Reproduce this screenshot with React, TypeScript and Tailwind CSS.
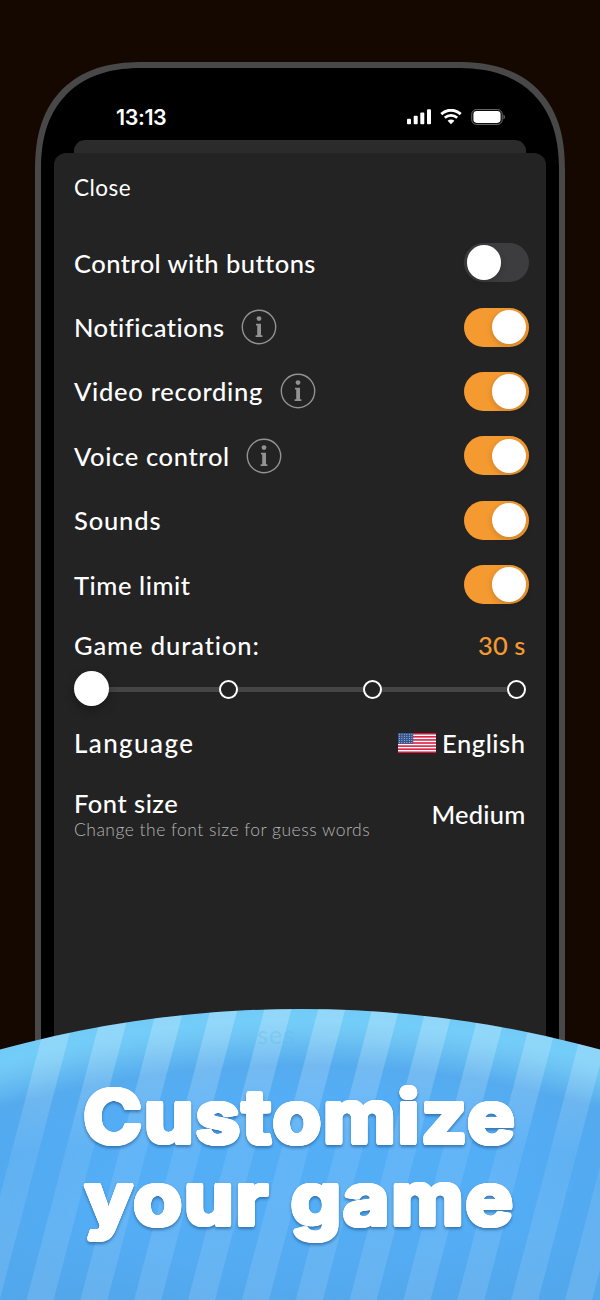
import React from "react";

type ToggleRow = { label: string; info?: boolean; on: boolean; tracking: string };

const rows: ToggleRow[] = [
  { label: "Control with buttons", on: false, tracking: "tracking-[0.44px]" },
  { label: "Notifications", info: true, on: true, tracking: "tracking-[0.5px]" },
  { label: "Video recording", info: true, on: true, tracking: "tracking-[0.72px]" },
  { label: "Voice control", info: true, on: true, tracking: "tracking-[0.65px]" },
  { label: "Sounds", on: true, tracking: "tracking-[0.85px]" },
  { label: "Time limit", on: true, tracking: "tracking-[0.55px]" },
];

function InfoIcon() {
  return (
    <svg className="ml-[16.5px] h-9 w-9 shrink-0" viewBox="0 0 36 36" fill="none">
      <circle cx="18" cy="18" r="16.7" stroke="#929292" strokeWidth="1.4" />
      <circle cx="18" cy="9.6" r="2.4" fill="#929292" />
      <path d="M15 14.8h5v11.4h1.4v1.7h-6.8v-1.7h1.6v-9.7H15z" fill="#929292" />
    </svg>
  );
}

function Toggle({ on }: { on: boolean }) {
  return (
    <div
      className={
        on
          ? "flex h-[39px] w-[64.5px] items-center justify-end rounded-full bg-[#f59a30] pr-[2.3px]"
          : "flex h-[39px] w-[64.5px] items-center rounded-full bg-[#3d3d40] pl-[2.5px]"
      }
    >
      <div className="size-[34.4px] rounded-full bg-white shadow-[0_2px_6px_rgba(0,0,0,0.18)]" />
    </div>
  );
}

function StatusIcons() {
  return (
    <div className="flex items-center">
      <svg className="h-4 w-6" viewBox="0 0 24 16" fill="#fff">
        <rect x="0" y="9.7" width="4" height="5.5" rx="1" />
        <rect x="6.7" y="6.8" width="4" height="8.4" rx="1" />
        <rect x="13.3" y="3.4" width="4" height="11.8" rx="1" />
        <rect x="20" y="0.3" width="4" height="14.9" rx="1" />
      </svg>
      <svg className="ml-[9px] h-4 w-[22px]" viewBox="0 0 22 16" fill="none" stroke="#fff">
        <path d="M1.3 5.1a14 14 0 0 1 19.4 0" strokeWidth="2.9" />
        <path d="M4.8 8.8a9 9 0 0 1 12.4 0" strokeWidth="2.7" />
        <path d="M11 15.2 7.6 11.8a4.9 4.9 0 0 1 6.8 0z" fill="#fff" stroke="none" />
      </svg>
      <svg className="ml-[9px] h-4 w-[35px]" viewBox="0 0 35 16" fill="none">
        <rect x="0.8" y="0.6" width="30.4" height="14.8" rx="4.6" stroke="#727272" strokeWidth="1" />
        <rect x="2.4" y="2.1" width="27.2" height="11.8" rx="3.3" fill="#fff" />
        <path d="M32.5 5.6c1.8.7 1.8 4.1 0 4.8z" fill="#727272" />
      </svg>
    </div>
  );
}

function Flag() {
  const bars = [0, 1, 2, 3, 4, 5, 6];
  const starRows = [0, 1, 2, 3, 4];
  const starCols = [0, 1, 2, 3, 4, 5];
  return (
    <svg className="h-5 w-[38px]" viewBox="0 0 38 20">
      <rect width="38" height="20" fill="#fff" />
      {bars.map((i) => (
        <rect key={i} y={(i * 40) / 13} width="38" height={20 / 13} fill="#d8173f" />
      ))}
      <rect width="15.3" height="10.77" fill="#34558f" />
      {starRows.map((r) =>
        starCols.map((c) => (
          <circle key={`${r}-${c}`} cx={1.4 + c * 2.5} cy={1.3 + r * 2.05} r="0.5" fill="#c5d0e2" />
        )),
      )}
    </svg>
  );
}

function Slider() {
  return (
    <div className="relative h-9 w-full">
      <div className="absolute left-[17px] right-[9px] top-[16px] h-[5px] bg-[#454545]" />
      <div className="absolute left-[144.5px] top-[9px] size-[19px] rounded-full border-[2.5px] border-white bg-[#232323]" />
      <div className="absolute left-[288.6px] top-[9px] size-[19px] rounded-full border-[2.5px] border-white bg-[#232323]" />
      <div className="absolute left-[433px] top-[9px] size-[19px] rounded-full border-[2.5px] border-white bg-[#232323]" />
      <div className="absolute left-0 top-[0.5px] size-[34.5px] rounded-full bg-white shadow-[0_4px_10px_rgba(0,0,0,0.3)]" />
    </div>
  );
}

function Banner() {
  const stripes = [-1, 0, 1, 2, 3, 4, 5, 6, 7, 8, 9, 10, 11];
  return (
    <div className="absolute inset-x-0 bottom-0 h-[291px] overflow-hidden [clip-path:circle(1131px_at_300px_1131px)]">
      <svg className="absolute inset-0 h-full w-full" viewBox="0 0 600 291">
        <defs>
          <radialGradient id="sky" gradientUnits="userSpaceOnUse" cx="300" cy="1131" r="1131">
            <stop offset="0.74" stopColor="#54a9ee" />
            <stop offset="0.83" stopColor="#54aef6" />
            <stop offset="0.92" stopColor="#54aef6" />
            <stop offset="0.95" stopColor="#55abee" />
            <stop offset="0.978" stopColor="#6fc6f4" />
            <stop offset="0.99" stopColor="#73cdf9" />
            <stop offset="1" stopColor="#72cbf6" />
          </radialGradient>
          <linearGradient id="sheen" gradientUnits="userSpaceOnUse" x1="0" y1="0" x2="0" y2="291">
            <stop offset="0" stopColor="#fff" stopOpacity="0.23" />
            <stop offset="0.25" stopColor="#fff" stopOpacity="0.17" />
            <stop offset="0.5" stopColor="#fff" stopOpacity="0.08" />
            <stop offset="1" stopColor="#fff" stopOpacity="0.12" />
          </linearGradient>
          <radialGradient id="edges" gradientUnits="userSpaceOnUse" cx="0" cy="0" r="1" gradientTransform="translate(300 185) scale(330 150)">
            <stop offset="0.6" stopColor="#50a0e0" stopOpacity="0" />
            <stop offset="1" stopColor="#50a0e0" stopOpacity="0.35" />
          </radialGradient>
          <linearGradient id="fade" x1="0" y1="0" x2="0" y2="1">
            <stop offset="0.3" stopColor="#000" />
            <stop offset="0.5" stopColor="#fff" />
          </linearGradient>
          <mask id="lower">
            <rect width="600" height="291" fill="url(#fade)" />
          </mask>
        </defs>
        <rect width="600" height="291" fill="url(#sky)" />
        <rect width="600" height="291" fill="url(#edges)" mask="url(#lower)" />
        {stripes.map((k) => {
          const x = 26.5 + k * 53.85;
          return (
            <path key={k} d={`M${x} 291L${x + 76.4} 0h27L${x + 27} 291z`} fill="url(#sheen)" />
          );
        })}
      </svg>
      <div className="absolute left-[257px] top-[10px] font-['Lato'] text-[25.5px] leading-[30px] tracking-[0.8px] text-[#62bbe8]/35">
        ses
      </div>
      <h1 className="relative pt-[66.5px] text-center font-['Inter'] text-[73px] font-bold leading-[82px] tracking-[2px] text-white [transform:scaleX(1.085)] [filter:drop-shadow(0_2px_1.5px_rgba(20,70,120,0.55))] [text-shadow:2.4px_0_#fff,-2.4px_0_#fff,0_2.4px_#fff,0_-2.4px_#fff,1.7px_1.7px_#fff,-1.7px_1.7px_#fff,1.7px_-1.7px_#fff,-1.7px_-1.7px_#fff,2.2px_0.9px_#fff,2.2px_-0.9px_#fff,-2.2px_0.9px_#fff,-2.2px_-0.9px_#fff,0.9px_2.2px_#fff,0.9px_-2.2px_#fff,-0.9px_2.2px_#fff,-0.9px_-2.2px_#fff]">
        Customize
        <br />
        your game
      </h1>
    </div>
  );
}

export default function App() {
  return (
    <div className="relative h-[1300px] w-[600px] overflow-hidden bg-[#140800] px-[35px] pt-[62px] font-['Lato','Open_Sans',sans-serif] text-white">
      <div className="h-[1300px] rounded-[108px] border-[6px] border-[#484848] bg-black px-[13px] [corner-shape:superellipse(1.25)]">
        <div className="flex h-[72px] items-end justify-between pl-[62px] pr-[40.5px]">
          <span className="pb-[11px] font-['Inter'] text-[21.5px] font-semibold leading-[24px] tracking-[-0.4px]">13:13</span>
          <div className="pb-[15px]">
            <StatusIcons />
          </div>
        </div>
        <div className="mx-5 h-[12.5px] rounded-t-[11px] bg-[#2b2b2b]" />
        <div className="h-[1100px] rounded-t-[12px] bg-[#232323] pl-5 pr-[17.5px]">
          <div className="pt-[21px] text-[22.5px] leading-[28px] tracking-[0.5px]">Close</div>
          <div className="pt-[29px]">
            {rows.map((row) => (
              <div key={row.label} className="flex h-[64.4px] items-center text-[25.5px] font-medium">
                <span className={row.tracking}>{row.label}</span>
                {row.info && <InfoIcon />}
                <div className="ml-auto">
                  <Toggle on={row.on} />
                </div>
              </div>
            ))}
          </div>
          <div className="mr-[3px] text-[25.5px] font-medium tracking-[0.4px]">
            <div className="flex h-[54px] items-center justify-between pt-[3px]">
              <span className="tracking-[0.9px]">Game duration:</span>
              <span className="tracking-[0.1px] text-[#f59a30]">30 s</span>
            </div>
            <Slider />
            <div className="mt-[18px] flex h-[36px] items-center justify-between">
              <span className="pt-0.5 text-[26px] tracking-[1.4px]">Language</span>
              <div className="flex items-center gap-[6.5px]">
                <Flag />
                <span className="tracking-[0.55px]">English</span>
              </div>
            </div>
            <div className="mt-[27px] flex items-center justify-between">
              <div>
                <div className="leading-[30px] tracking-[0.5px]">Font size</div>
                <div className="text-[17.5px] font-light leading-[24px] tracking-[0.48px] text-[#b4b4b4]">
                  Change the font size for guess words
                </div>
              </div>
              <span className="pb-px tracking-[0.2px]">Medium</span>
            </div>
          </div>
        </div>
      </div>
      <Banner />
    </div>
  );
}
